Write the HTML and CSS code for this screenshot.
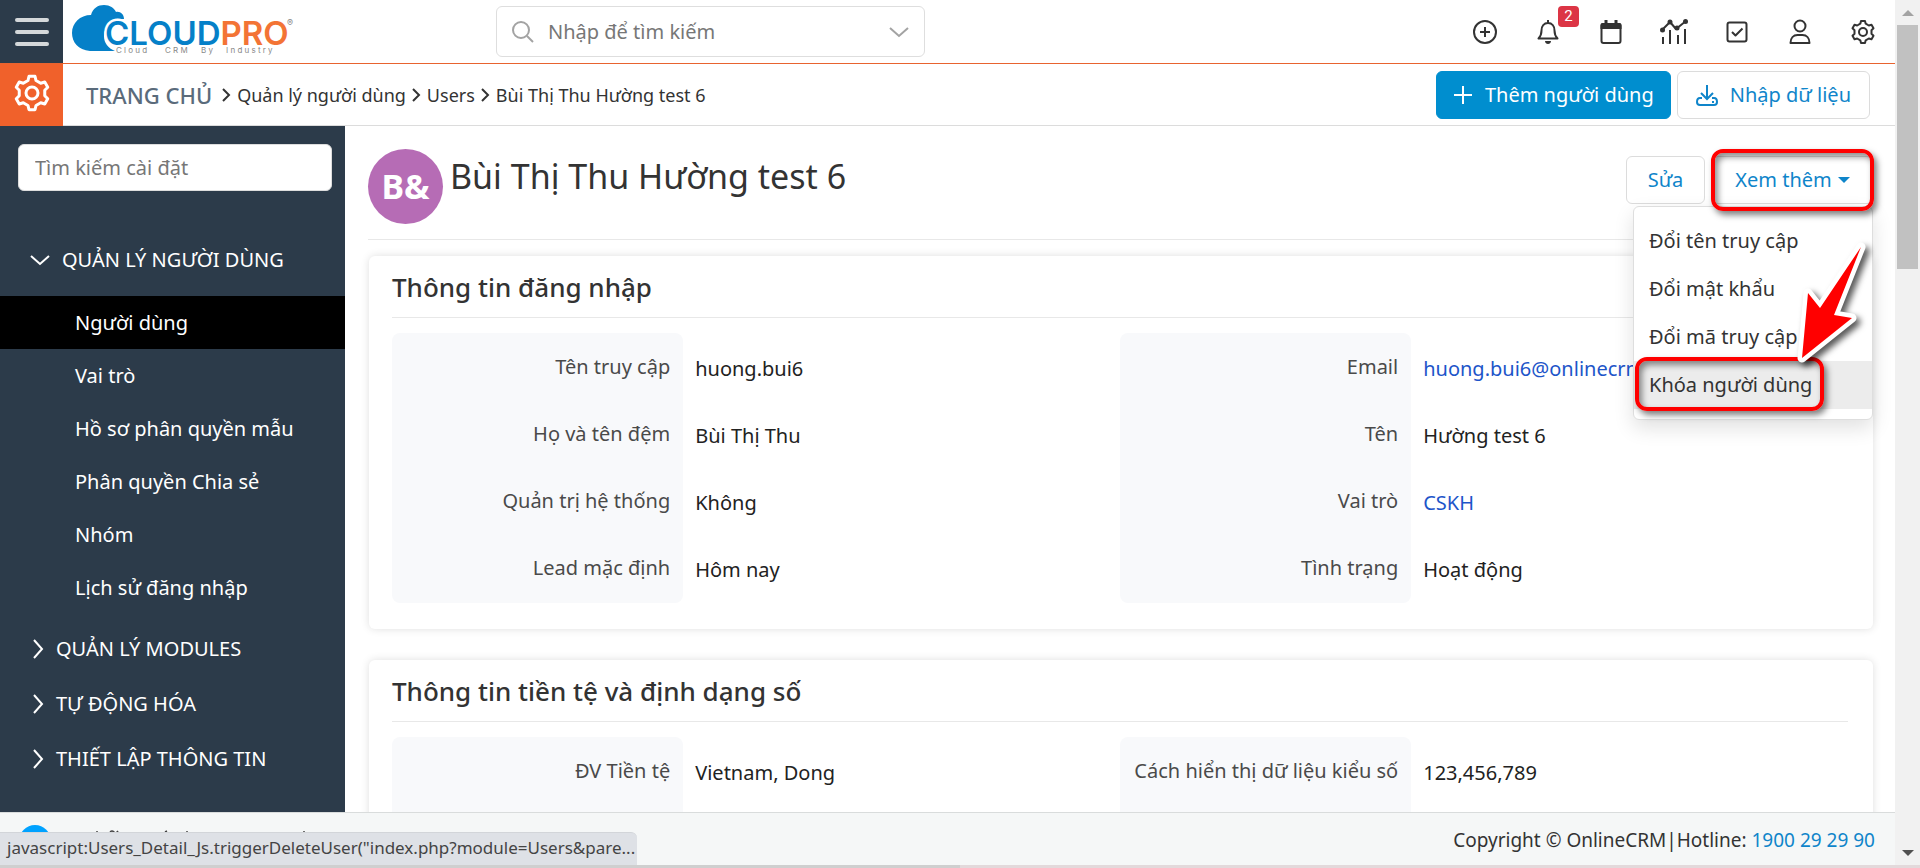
FILE: index.html
```html
<!DOCTYPE html>
<html lang="vi">
<head>
<meta charset="utf-8">
<meta name="viewport" content="width=device-width, initial-scale=1">
<title>CloudPro CRM - Người dùng</title>
<link rel="stylesheet" href="styles.css">
</head>
<body>
<div class="window">
  <div class="app">
    <header class="topbar">
      <button class="menu-toggle" type="button" aria-label="Menu"><span></span><span></span><span></span></button>
      <a class="logo" href="#" aria-label="CloudPro">
        <svg width="228" height="56" viewBox="0 0 228 56">
          <path fill="#0580c8" d="M47 47H22C10 46 4 38 4 29 4 19 12 11 23 11 25 4 30 1 36 1 42 1 46 4 48 8 52 7 56 10 56 15 44 15 36 22 36 32 36 39 40 44 47 47Z"/>
          <text class="logo-name" x="37" y="41"><tspan class="logo-blue">CLOUD</tspan><tspan class="logo-orange">PRO</tspan></text>
          <text class="logo-reg" x="219" y="22">®</text>
          <g class="logo-tag"><text x="48" y="49">C l o u d</text><text x="97" y="49">C R M</text><text x="133" y="49">B y</text><text x="158" y="49">I n d u s t r y</text></g>
        </svg>
      </a>
      <label class="global-search">
        <svg width="22" height="22" viewBox="0 0 22 22" fill="none" stroke="#a3a3a3" stroke-width="2"><circle cx="9" cy="9" r="8"/><path d="M15 15l6 6"/></svg>
        <input type="text" placeholder="Nhập để tìm kiếm" aria-label="Nhập để tìm kiếm">
        <svg width="20" height="12" viewBox="0 0 20 12" fill="none" stroke="#a3a3a3" stroke-width="2"><path d="M1 2l9 8 9-8"/></svg>
      </label>
      <nav class="quick-actions" aria-label="Công cụ">
        <button type="button" aria-label="Thêm"><svg viewBox="0 0 28 28"><circle cx="14" cy="14" r="11"/><path d="M14 9v10M9 14h10"/></svg></button>
        <button type="button" aria-label="Thông báo"><svg viewBox="0 0 28 28"><path d="M14 2v3M4.500 20.500h19c-2-2-3-4-3-8 0-4.500-2.500-7.500-6.500-7.500s-6.500 3-6.500 7.500c0 4-1 6-3 8z"/><path class="solid" d="M11 23h6c0 4-6 4-6 0z"/></svg><span class="badge">2</span></button>
        <button type="button" aria-label="Lịch"><svg viewBox="0 0 28 28"><rect x="4.500" y="6" width="19" height="19" rx="2"/><path class="solid" d="M3.500 11V7q0-2 2-2h2V2h3v3h7V2h3v3h2q2 0 2 2v4z"/></svg></button>
        <button type="button" aria-label="Báo cáo"><svg viewBox="0 0 28 28"><path d="M2 12l8-8 6 7 10-8M3 19v7M10 12v14M18 17v9M25 11v15"/><g class="solid"><circle cx="2.500" cy="12" r="2.500"/><circle cx="10" cy="4" r="2.500"/><circle cx="17" cy="10" r="2.500"/><circle cx="25.500" cy="3.500" r="2.500"/></g></svg></button>
        <button type="button" aria-label="Công việc"><svg viewBox="0 0 28 28"><rect x="4.500" y="4.500" width="19" height="19" rx="2"/><path d="M9 14l3.500 3.500 7-7"/></svg></button>
        <button type="button" aria-label="Tài khoản"><svg viewBox="0 0 28 28"><circle cx="14" cy="8" r="5.500"/><path d="M4.500 25c0-5 3-8 7-8h5c4 0 7 3 7 8z"/></svg></button>
        <button type="button" aria-label="Cài đặt"><svg viewBox="0 0 28 28"><use href="#gear"/></svg></button>
      </nav>
    </header>

    <div class="crumb-bar">
      <a class="settings-tile" href="#" aria-label="Cài đặt"><svg width="42" height="42" viewBox="0 0 28 28"><g id="gear"><path d="M11.300 5.700L12 2.900H16L16.700 5.700L19.800 7.500L22.500 6.700L24.500 10.200L22.500 12.200V15.800L24.500 17.800L22.500 21.300L19.800 20.500L16.700 22.300L16 25.100H12L11.300 22.300L8.200 20.500L5.500 21.300L3.500 17.800L5.500 15.800V12.200L3.500 10.200L5.500 6.700L8.200 7.500Z"/><circle cx="14" cy="14" r="4"/></g></svg></a>
      <nav class="crumbs" aria-label="Breadcrumb">
        <a class="home" href="#">TRANG CHỦ</a>
        <svg width="9" height="16" viewBox="0 0 9 16"><path d="M1 2l6 6-6 6"/></svg>
        <a href="#">Quản lý người dùng</a>
        <svg width="9" height="16" viewBox="0 0 9 16"><path d="M1 2l6 6-6 6"/></svg>
        <a href="#">Users</a>
        <svg width="9" height="16" viewBox="0 0 9 16"><path d="M1 2l6 6-6 6"/></svg>
        <span>Bùi Thị Thu Hường test 6</span>
      </nav>
      <div class="page-actions">
        <button class="btn primary" type="button"><svg width="20" height="20" viewBox="0 0 20 20"><path d="M10 1v18M1 10h18"/></svg>Thêm người dùng</button>
        <button class="btn" type="button"><svg width="22" height="22" viewBox="0 0 22 22"><path d="M11 1v13M5 9l6 6 6-6M6 14H4c-2 0-3 2-3 4s1 3 3 3h14c2 0 3-1 3-3s-1-4-3-4h-2M16 18h2"/></svg>Nhập dữ liệu</button>
      </div>
    </div>

    <div class="content">
      <aside class="sidebar">
        <input class="side-search" type="text" placeholder="Tìm kiếm cài đặt" aria-label="Tìm kiếm cài đặt">
        <nav aria-label="Cài đặt">
          <button class="group open" type="button"><svg width="20" height="12" viewBox="0 0 20 12"><path d="M1 2l9 8 9-8"/></svg>QUẢN LÝ NGƯỜI DÙNG</button>
          <ul class="sub">
            <li><a class="active" href="#">Người dùng</a></li>
            <li><a href="#">Vai trò</a></li>
            <li><a href="#">Hồ sơ phân quyền mẫu</a></li>
            <li><a href="#">Phân quyền Chia sẻ</a></li>
            <li><a href="#">Nhóm</a></li>
            <li><a href="#">Lịch sử đăng nhập</a></li>
          </ul>
          <button class="group" type="button"><svg width="12" height="20" viewBox="0 0 12 20"><path d="M2 1l8 9-8 9"/></svg>QUẢN LÝ MODULES</button>
          <button class="group" type="button"><svg width="12" height="20" viewBox="0 0 12 20"><path d="M2 1l8 9-8 9"/></svg>TỰ ĐỘNG HÓA</button>
          <button class="group" type="button"><svg width="12" height="20" viewBox="0 0 12 20"><path d="M2 1l8 9-8 9"/></svg>THIẾT LẬP THÔNG TIN</button>
        </nav>
      </aside>

      <main class="main">
        <div class="record-head">
          <span class="avatar">B&amp;</span>
          <h1>Bùi Thị Thu Hường test 6</h1>
          <div class="record-actions">
            <button class="btn edit" type="button">Sửa</button>
            <div class="more">
              <button class="btn more-btn" type="button" aria-expanded="true">Xem thêm<span class="caret"></span></button>
              <div class="menu">
                <a href="#">Đổi tên truy cập</a>
                <a href="#">Đổi mật khẩu</a>
                <a href="#">Đổi mã truy cập</a>
                <a class="hover" href="#">Khóa người dùng</a>
                <span class="mark mark-lock"></span>
                <svg class="arrow" width="84" height="136" viewBox="0 0 84 136"><path d="M13 124L19 59 31 74 72 13 45 81 63 84Z" fill="#f00" stroke="#fff" stroke-width="9" stroke-linejoin="round" paint-order="stroke"/></svg>
              </div>
              <span class="mark mark-more"></span>
            </div>
          </div>
        </div>

        <section class="card">
          <h2>Thông tin đăng nhập</h2>
          <div class="columns">
            <dl>
              <div><dt>Tên truy cập</dt><dd>huong.bui6</dd></div>
              <div><dt>Họ và tên đệm</dt><dd>Bùi Thị Thu</dd></div>
              <div><dt>Quản trị hệ thống</dt><dd>Không</dd></div>
              <div><dt>Lead mặc định</dt><dd>Hôm nay</dd></div>
            </dl>
            <dl>
              <div><dt>Email</dt><dd><a href="#">huong.bui6@onlinecrm</a></dd></div>
              <div><dt>Tên</dt><dd>Hường test 6</dd></div>
              <div><dt>Vai trò</dt><dd><a href="#">CSKH</a></dd></div>
              <div><dt>Tình trạng</dt><dd>Hoạt động</dd></div>
            </dl>
          </div>
        </section>

        <section class="card">
          <h2>Thông tin tiền tệ và định dạng số</h2>
          <div class="columns">
            <dl>
              <div><dt>ĐV Tiền tệ</dt><dd>Vietnam, Dong</dd></div>
              <div><dt></dt><dd></dd></div>
            </dl>
            <dl>
              <div><dt>Cách hiển thị dữ liệu kiểu số</dt><dd>123,456,789</dd></div>
              <div><dt></dt><dd></dd></div>
            </dl>
          </div>
        </section>
      </main>
    </div>

    <footer class="footer">
      <svg class="chat" width="300" height="30" viewBox="0 0 300 30"><circle cx="15" cy="16" r="16" fill="#00a2ff"/><path d="M77 6v2M90 7q2-2 4 0t4-1M145 7l2-1M167 6v2M284 6v2" fill="none" stroke="#444" stroke-width="1.500"/></svg>
      <p>Copyright © OnlineCRM|Hotline: <a href="#">1900 29 29 90</a></p>
      <div class="status">javascript:Users_Detail_Js.triggerDeleteUser("index.php?module=Users&amp;pare...</div>
    </footer>
  </div>
  <div class="scrollbar"><span class="up"></span><span class="thumb"></span><span class="down"></span></div>
</div>
<div class="taskbar"></div>
</body>
</html>
```

FILE: styles.css
```css
* { box-sizing: border-box; }
body {
  margin: 0;
  height: 100vh;
  display: flex;
  flex-direction: column;
  overflow: hidden;
  background: #fff;
  color: #333;
  font: 20px/28px "Noto Sans", "Open Sans", sans-serif;
}
a { color: inherit; text-decoration: none; }
button, input { font: inherit; color: inherit; margin: 0; }
button { cursor: pointer; }
h1, h2, p, ul, dl, dd { margin: 0; padding: 0; }
svg { flex: none; }

.window { flex: 1; min-height: 0; display: flex; }
.app { flex: 1; min-width: 0; display: flex; flex-direction: column; }

.topbar { flex: none; height: 64px; display: flex; align-items: center; border-bottom: 1px solid #e8632f; }
.menu-toggle {
  width: 63px; height: 63px; flex: none; border: 0; background: #2c3b4a;
  display: flex; flex-direction: column; align-items: center; justify-content: center; gap: 8px; padding: 0;
}
.menu-toggle span { width: 34px; height: 4px; border-radius: 2px; background: #d5d8da; }
.logo { flex: none; width: 433px; padding: 0 5px; display: flex; }
.logo-name { font: 600 33px "Inter", sans-serif; paint-order: stroke; stroke: #fff; stroke-width: 5px; }
.logo-blue { fill: #0580c8; }
.logo-orange { fill: #f37435; }
.logo-reg { font: 9px "Inter", sans-serif; fill: #888; }
.logo-tag { font: 8px "Inter", sans-serif; fill: #888; }
.global-search {
  width: 429px; height: 51px; display: flex; align-items: center; padding: 0 15px;
  border: 1px solid #dedede; border-radius: 6px;
}
.global-search input { flex: 1; min-width: 0; border: 0; outline: 0; padding: 0 14px; background: none; }
input::placeholder { color: #777; opacity: 1; }
.quick-actions { margin-left: auto; padding-right: 14px; display: flex; gap: 27px; }
.quick-actions button { position: relative; width: 36px; height: 36px; padding: 4px; border: 0; background: none; }
.quick-actions svg { width: 28px; height: 28px; display: block; fill: none; stroke: #333; stroke-width: 2; stroke-linejoin: round; }
.quick-actions .solid { fill: #333; stroke: none; }
.badge {
  position: absolute; left: 28px; top: -8px; width: 21px; height: 21px; border-radius: 4px;
  background: #dc3545; color: #fff; font: 15px/21px Roboto, sans-serif; text-align: center;
}

.crumb-bar { flex: none; height: 62px; display: flex; align-items: center; border-bottom: 1px solid #dcdcdc; }
.settings-tile { width: 63px; height: 62px; background: #f0612b; display: flex; align-items: center; justify-content: center; }
.settings-tile svg { margin-bottom: 4px; fill: none; stroke: #fff; stroke-width: 2; stroke-linejoin: round; }
.crumbs { display: flex; align-items: center; gap: 6px; padding-left: 23px; font-size: 18px; }
.crumbs svg { fill: none; stroke: #333; stroke-width: 2; }
.crumbs .home { font-size: 22px; font-weight: 500; color: #5a6b7b; margin-right: 4px; }
.page-actions { margin-left: auto; padding-right: 25px; display: flex; gap: 6px; }
.btn {
  height: 48px; padding: 0 18px; display: flex; align-items: center; justify-content: center; gap: 12px; white-space: nowrap;
  border: 1px solid #dcdcdc; border-radius: 6px; background: #fff; color: #0f85ca;
}
.btn svg { fill: none; stroke: currentColor; stroke-width: 2; }
.btn.primary { padding: 0 16px; background: #008ecf; border-color: #008ecf; color: #fff; }

.content { flex: 1; min-height: 0; display: flex; overflow: hidden; }
.sidebar { flex: none; width: 345px; background: #2c3b4a; color: #fff; display: flex; flex-direction: column; }
.side-search { margin: 18px 13px 0 18px; height: 47px; padding: 0 16px; border: 1px solid #ddd; border-radius: 6px; background: #fff; }
.sidebar nav { padding-top: 40px; }
.group { width: 100%; height: 55px; display: flex; align-items: center; gap: 12px; padding: 0 32px; border: 0; background: none; text-align: left; white-space: nowrap; }
.group.open { padding-left: 30px; height: 65px; padding-bottom: 8px; }
.group svg { fill: none; stroke: #fff; stroke-width: 2; }
.sub { list-style: none; padding-bottom: 7px; }
.sub a { display: block; padding: 0 0 0 75px; line-height: 53px; }
.sub a.active { background: #000; }

.main { flex: 1; min-width: 0; padding: 23px 22px 0 24px; }
.record-head { height: 91px; display: flex; align-items: flex-start; margin-left: -1px; border-bottom: 1px solid #e8e8e8; }
.avatar { flex: none; width: 75px; height: 75px; border-radius: 50%; background: #b66cb5; color: #fff; font-size: 34px; font-weight: 700; line-height: 75px; text-align: center; }
h1 { flex: 1; padding-left: 7px; font-size: 34px; font-weight: 400; line-height: 54px; }
.record-actions { display: flex; gap: 7px; padding-top: 7px; }
.edit { width: 79px; }
.more { position: relative; z-index: 2; }
.more-btn { width: 161px; gap: 6px; }
.caret { border: 6px solid transparent; border-top-color: currentColor; border-bottom: 0; }
.menu {
  position: absolute; right: 0; top: 50px; width: 240px; padding: 10px 0;
  border: 1px solid #dedede; border-radius: 6px; background: #fff; box-shadow: 0 8px 20px rgba(0, 0, 0, .12);
}
.menu a { display: block; padding: 0 15px; line-height: 48px; }
.menu .hover { background: #ececec; }
.mark {
  position: absolute; border: 4px solid #f00; border-radius: 12px; pointer-events: none;
  box-shadow: 3px 4px 6px rgba(0, 0, 0, .5), inset 3px 4px 6px rgba(0, 0, 0, .45);
}
.mark-more { left: -1px; top: -7px; right: -1px; height: 62px; }
.mark-lock { left: 1px; bottom: 8px; width: 189px; height: 54px; }
.arrow { position: absolute; left: 155px; top: 27px; filter: drop-shadow(4px 4px 3px rgba(0, 0, 0, .65)); overflow: visible; }

.card { margin-top: 16px; padding: 0 25px 28px 23px; border-radius: 6px; background: #fff; box-shadow: 0 0 8px rgba(0, 0, 0, .13); }
.card + .card { margin-top: 31px; }
h2 { height: 62px; font-size: 26px; font-weight: 500; line-height: 63px; border-bottom: 1px solid #e8e8e8; }
.columns { display: grid; grid-template-columns: 1fr 1fr; padding-top: 15px; }
dl > div { display: grid; grid-template-columns: 2fr 3fr; height: 67px; line-height: 67px; }
dt { padding-right: 13px; text-align: right; background: #f8f9fb; color: #4a4a4a; white-space: nowrap; }
dl > div:first-child dt { border-radius: 8px 8px 0 0; }
dl > div:last-child dt { border-radius: 0 0 8px 8px; }
dd { padding: 2px 0 0 12px; color: #222; white-space: nowrap; }
dd a { color: #1d55c9; }

.footer { position: relative; flex: none; height: 53px; display: flex; align-items: flex-start; justify-content: space-between; padding: 12px 20px 0; background: #f5f7f7; border-top: 1px solid #d9dcdc; font-size: 19px; line-height: 30px; }
.footer a { color: #0f85ca; }
.status {
  position: absolute; left: 0; bottom: 0; height: 33px; padding: 0 2px 0 7px; overflow: hidden;
  background: #dee1e6; border-top: 1px solid #d2d5d9; border-radius: 0 6px 0 0; font-size: 17px; color: #444;
}

.scrollbar { flex: none; width: 25px; display: flex; flex-direction: column; align-items: center; background: #f1f1f1; }
.up, .down { border: 6px solid transparent; }
.up { border-bottom-color: #a3a3a3; border-top: 0; margin: 10px 0 9px; }
.thumb { width: 21px; height: 244px; background: #c1c1c1; }
.down { border-top-color: #505050; border-bottom: 0; margin: auto 0 9px; }
.taskbar { flex: none; height: 3px; background: linear-gradient(90deg, #cfcfcf 50%, #e3d9db 50%); }
```
